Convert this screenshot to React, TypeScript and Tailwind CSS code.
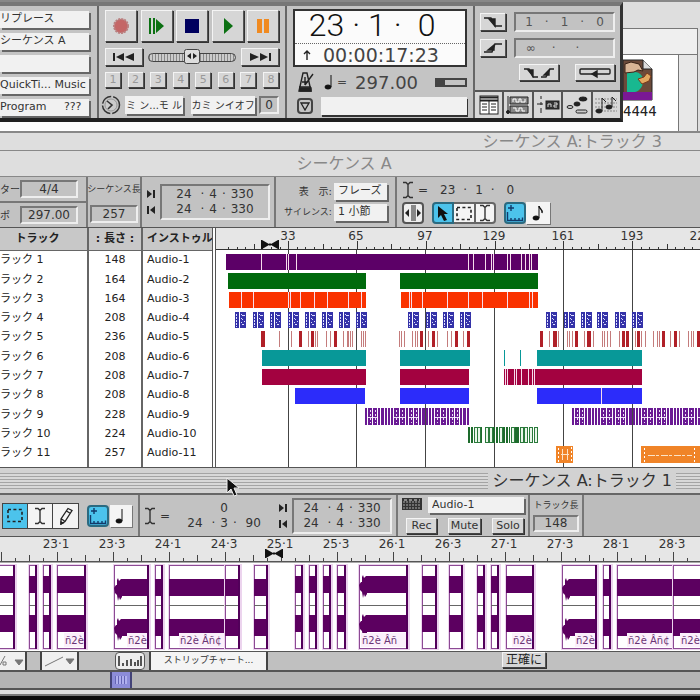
import React, { FC, ReactNode } from 'react';

const raised = 'border border-[#f4f4f4] border-r-[#555] border-b-[#444] bg-[#d6d6d6] shadow-[1px_1px_0_#333]';
const sunken = 'border-2 border-[#777] border-r-[#eee] border-b-[#eee] bg-[#c2c2c2]';
const popup = 'block appearance-none rounded-none bg-[#f1f1f1] text-[#333] shadow-[2px_2px_0_#666]';
const toolCell = 'flex items-center justify-center border border-[#444]';

interface Track {
  id: number,
  length: number,
  color: string,
  bars: number[][],
  gaps: number[],
}

const tracks: Track[] = [
  {
    id: 1, length: 148, color: '#5c0067', bars: [[226, 538]],
    gaps: [261, 286, 288, 296, 468, 473, 485, 491, 493, 507, 510, 521, 525, 529, 531],
  },
  { id: 2, length: 164, color: '#006a0c', bars: [[228, 366], [400, 538]], gaps: [] },
  {
    id: 3, length: 164, color: '#fa3200', bars: [[229, 366], [401, 538]],
    gaps: [241, 253, 288, 290, 300, 314, 327, 348, 361, 409, 411, 422, 447, 468, 482, 507, 529, 532],
  },
  { id: 4, length: 208, color: '#3432a8', bars: [], gaps: [] },
  { id: 5, length: 236, color: '#b04040', bars: [], gaps: [] },
  { id: 6, length: 208, color: '#089898', bars: [[262, 366], [400, 470], [504, 505], [520, 521], [537, 642]], gaps: [] },
  {
    id: 7, length: 208, color: '#a30240', bars: [[262, 366], [400, 469], [504, 642]],
    gaps: [505, 507, 514, 516, 521, 528, 532, 534],
  },
  { id: 8, length: 208, color: '#2c2cfa', bars: [[295, 365], [400, 469], [537, 642]], gaps: [601] },
  { id: 9, length: 228, color: '#6a1a94', bars: [], gaps: [] },
  { id: 10, length: 224, color: '#2b7a3c', bars: [], gaps: [] },
  { id: 11, length: 257, color: '#f08428', bars: [], gaps: [] },
];

const blueClips = [235, 253, 270, 288, 305, 322, 339, 356, 408, 426, 443, 460, 546, 564, 581, 597, 615, 632];
const redHits = [
  [261, 4], [279, 1], [291, 1], [299, 3], [308, 1], [311, 3], [315, 1], [317, 1], [326, 1], [330, 1], [334, 3],
  [343, 1], [347, 2], [350, 1], [352, 1], [361, 1], [363, 1], [365, 1], [399, 1], [401, 1], [404, 1], [412, 1],
  [415, 1], [417, 1], [420, 3], [428, 1], [432, 3], [437, 1], [447, 1], [451, 1], [455, 3], [463, 1], [467, 3],
  [540, 3], [549, 1], [553, 4], [558, 1], [567, 1], [569, 1], [572, 1], [575, 3], [584, 1], [587, 4], [593, 1],
  [602, 1], [604, 1], [607, 1], [610, 1], [619, 1], [622, 3], [626, 3], [635, 1], [637, 3], [641, 1], [645, 1],
  [653, 1], [657, 1], [659, 1], [662, 3], [670, 1], [674, 3], [679, 1], [688, 1], [691, 1], [693, 1], [697, 3],
];
const majorTicks = [288, 356, 425, 494, 563, 632, 701];

// edges and kind of every sound bite in the lower window
const bites: { x: number, w: number, attack?: boolean, low?: boolean, label?: string }[] = [
  { x: -12, w: 26 }, { x: 29, w: 7 }, { x: 43, w: 7 }, { x: 57, w: 28, label: 'ñ2è' },
  { x: 114, w: 34, attack: true, low: true, label: 'ñ2è' }, { x: 155, w: 7, low: true },
  { x: 169, w: 56, low: true, label: 'ñ2è Âñ¢' }, { x: 225, w: 14, low: true },
  { x: 254, w: 13, low: true }, { x: 295, w: 7 }, { x: 309, w: 7 }, { x: 323, w: 7 }, { x: 337, w: 8 },
  { x: 359, w: 48, attack: true, label: 'ñ2è Âñ' }, { x: 422, w: 14 }, { x: 449, w: 13 }, { x: 477, w: 7 },
  { x: 491, w: 7 }, { x: 506, w: 27, label: 'ñ2è' }, { x: 562, w: 34, attack: true, low: true, label: 'ñ2è' },
  { x: 603, w: 7, low: true }, { x: 617, w: 56, low: true, label: 'ñ2è Âñ¢' }, { x: 673, w: 28, low: true, label: 'ñ2è' },
];

const Counter: FC<{ parts: string[], className?: string }> = ({ parts, className = 'gap-[5px]' }) => (
  <span className={`flex items-center justify-center whitespace-pre ${className}`}>
    {parts.map((p, i) => <span key={i}>{p}</span>)}
  </span>
);

const Popup: FC<{ label: string, value: string, className?: string }> = ({ label, value, className = '' }) => (
  <select aria-label={label} className={`${popup} ${className}`}>
    <option>{value}</option>
  </select>
);

const Tool: FC<{ label: string, className?: string, children: ReactNode }> = ({ label, className = '', children }) => (
  <button type="button" aria-label={label} className={`flex shrink-0 items-center justify-center ${className}`}>
    {children}
  </button>
);

const IBeam: FC = () => (
  <svg width="12" height="18" fill="none" stroke="#333" strokeWidth="1.4">
    <path d="M1 1.5h3l2 2 2-2h3M6 3v12M1 16.5h3l2-2 2 2h3" />
  </svg>
);

const Marquee: FC = () => (
  <svg width="16" height="15" fill="none" stroke="#222" strokeWidth="1.6" strokeDasharray="3 2.4">
    <rect x="1" y="1.5" width="14" height="12" />
  </svg>
);

const SnapIcon: FC = () => (
  <svg width="18" height="18" fill="none" stroke="#123a6a" strokeWidth="1.4">
    <path d="M5 1v6M2 4h6M1.5 8v8.500h15v-3M5 16v-2M9 16v-2M13 16v-2" />
  </svg>
);

const NoteIcon: FC<{ flag?: boolean }> = ({ flag }) => (
  <svg width="14" height="18" fill="#111" stroke="#111">
    <ellipse cx="5" cy="14" rx="3" ry="2" />
    <path d="M8 14V2" />
    {flag && <path d="M8 2c0 3 4 3 3 7" fill="none" strokeWidth="1.4" />}
  </svg>
);

const BowTie: FC<{ x: number, y: number }> = ({ x, y }) => (
  <path d={`M${x} ${y}h1l7 4 1-1 1 1 7-4h1v9h-1l-7-4-1 1-1-1-7 4h-1z`} fill="#111" />
);

const SelectionTimes: FC = () => (
  <div className="flex flex-1 items-center gap-1 px-1">
    <svg width="10" height="28" fill="#222">
      <path d="M1 2l5 4-5 4zM7 2h2v8h-2zM9 18l-5 4 5 4zM1 18h2v8h-2z" />
    </svg>
    <div className={`flex flex-1 flex-col ${sunken} py-px text-[12px] leading-[15px]`}>
      <Counter parts={['24 ', '·', '4', '·', '330']} />
      <Counter parts={['24 ', '·', '4', '·', '330']} />
    </div>
  </div>
);

const Transport: FC = () => (
  <div className="flex w-[188px] shrink-0 flex-col gap-[6px] border-r-2 border-[#666] px-[6px] pt-1">
    <div className="flex justify-between">
      <Tool label="Record" className={`${raised} h-8 w-8`}>
        <svg width="18" height="18"><circle cx="9" cy="9" r="7" fill="#c46666" stroke="#b98080" strokeWidth="2" strokeDasharray="2 1" /></svg>
      </Tool>
      <Tool label="Wait" className={`${raised} h-8 w-8`}>
        <svg width="18" height="18" fill="#0b7012"><path d="M1 1h2v16h-2zM5 1h2v16h-2zM8 2l8 7-8 7z" /></svg>
      </Tool>
      <Tool label="Stop" className={`${raised} h-8 w-8`}>
        <svg width="16" height="16"><rect x="1" y="1" width="14" height="14" fill="#00005e" /></svg>
      </Tool>
      <Tool label="Play" className={`${raised} h-8 w-8`}>
        <svg width="16" height="18" fill="#0b7012"><path d="M4 1l9 8-9 8z" /></svg>
      </Tool>
      <Tool label="Pause" className={`${raised} h-8 w-8`}>
        <svg width="14" height="16" fill="#f08a20"><path d="M1 1h5v14H1zM8 1h5v14H8z" /></svg>
      </Tool>
    </div>
    <div className="flex items-center justify-between">
      <Tool label="Rewind" className={`${raised} h-[18px] w-[38px]`}>
        <svg width="24" height="10" fill="#222"><path d="M1 1h2v8H1zM12 1v8L4 5zM22 1v8l-9-4z" /></svg>
      </Tool>
      <label className="relative flex h-[18px] w-[88px] items-center">
        <input type="range" aria-label="Scrub" className="absolute inset-0 w-full opacity-0" />
        <span className="h-[9px] w-full rounded-full border border-[#444] bg-[repeating-linear-gradient(90deg,#888_0_1px,#ccc_1px_3px)]" />
        <svg className="absolute left-9" width="17" height="18">
          <rect x="0.5" y="1.500" width="15" height="14" rx="2" fill="#ddd" stroke="#444" />
          <path d="M7 5v6L3 8zM9 5v6l4-3z" fill="#222" />
        </svg>
      </label>
      <Tool label="Fast forward" className={`${raised} h-[18px] w-[38px]`}>
        <svg width="24" height="10" fill="#222"><path d="M21 1h2v8h-2zM12 1v8l8-4zM2 1v8l9-4z" /></svg>
      </Tool>
    </div>
    <div className="flex justify-between">
      {[1, 2, 3, 4, 5, 6, 7, 8].map((n) => (
        <button key={n} type="button" className={`${raised} h-4 w-4 bg-[#c8c8c8] text-[11px] leading-3 text-[#999]`}>
          {n}
        </button>
      ))}
    </div>
    <div className="flex items-center gap-1 pt-px">
      <svg className="-ml-1 shrink-0" width="20" height="20" fill="none" stroke="#333">
        <circle cx="10" cy="10" r="8.500" strokeDasharray="12 2" strokeWidth="1.500" />
        <circle cx="10" cy="10" r="6" fill="#ccc" stroke="#999" />
        <path d="M6 6l5 4-4 4" strokeWidth="1.600" />
      </svg>
      <button type="button" className={`${popup} h-[18px] w-[60px] whitespace-pre text-[10px]`}>ミ ン...モ ル</button>
      <button type="button" className={`${popup} ml-1 h-[18px] w-[66px] whitespace-pre text-[10px]`}>カミ ンイオフ</button>
      <span className={`${sunken} h-[18px] w-5 shrink-0 text-center text-[12px] leading-[14px]`}>0</span>
    </div>
  </div>
);

const Display: FC = () => (
  <div className="flex w-[188px] shrink-0 flex-col border-r-2 border-[#666] px-[6px] pt-[3px]">
    <div className="border-2 border-[#333] bg-[#fbfbfb]">
      <div className="flex h-[33px] items-center justify-center gap-2 border-b border-dotted border-[#666] pr-4 pb-1 font-['Roboto',sans-serif] text-[32px] leading-7 font-light text-[#111]">
        <span>23</span>
        <span>·</span>
        <span>1</span>
        <span>·</span>
        <span className="pl-2">0</span>
      </div>
      <div className="flex h-[21px] items-center gap-3 pl-2 text-[19px] leading-5 text-[#444]">
        <svg width="8" height="12" fill="none" stroke="#222" strokeWidth="1.400"><path d="M4 11V2M1 5l3-3 3 3" /></svg>
        <span>00:00:17:23</span>
      </div>
    </div>
    <div className="flex h-[30px] items-center gap-2 pl-1 text-[18px] text-[#444]">
      <svg width="18" height="22" fill="none" stroke="#222" strokeWidth="1.400">
        <path d="M6 2h4l4 18H2zM2 16h12M8 14l8-11M8 6v8M5 11h6" />
        <path d="M3 17h11v3H3z" fill="#222" />
      </svg>
      <NoteIcon />
      <span className="-ml-2 text-[12px]">=</span>
      <span className="flex-1">297.00</span>
      <span className="flex h-[9px] w-8 border-2 border-[#444]"><span className="w-2 bg-[#444]" /></span>
    </div>
    <div className="flex items-center gap-2 pl-1">
      <Tool label="Options" className="h-4 w-4 rounded-sm border-2 border-[#444]">
        <svg width="10" height="9" fill="none" stroke="#222" strokeWidth="1.300"><path d="M1 1h8L5 8z" /></svg>
      </Tool>
      <span className="h-[18px] flex-1 bg-[#f1f1f1] shadow-[1px_2px_0_#333]" />
    </div>
  </div>
);

const Memory: FC = () => (
  <div className="flex w-[145px] shrink-0 flex-col justify-between">
    <div className="flex flex-col gap-[6px] px-[5px] pt-[6px] text-[12px] text-[#555]">
      <div className="flex items-center gap-2">
        <Tool label="Go to start" className={`${raised} h-[18px] w-[26px]`}>
          <svg width="20" height="14" fill="none" stroke="#222" strokeWidth="1.400"><path d="M1 3h7l4 8h7" /><path d="M6 4h6v7z" fill="#222" /></svg>
        </Tool>
        <div className={`${sunken} h-5 flex-1`}><Counter className="gap-3 leading-4" parts={['1', '·', '1', '·', '0']} /></div>
      </div>
      <div className="flex items-center gap-2">
        <Tool label="Go to end" className={`${raised} h-[18px] w-[26px]`}>
          <svg width="20" height="14" fill="none" stroke="#222" strokeWidth="1.400"><path d="M1 11h8l3-8h7" /><path d="M5 9h6V4z" fill="#222" /></svg>
        </Tool>
        <div className={`${sunken} h-5 flex-1`}><Counter className="gap-4 pr-6 leading-4" parts={['∞', '·', ' ·']} /></div>
      </div>
      <div className="flex justify-end gap-4">
        <Tool label="Auto memory" className={`${raised} h-[17px] w-10`}>
          <svg width="32" height="12" fill="none" stroke="#222" strokeWidth="1.400"><path d="M1 2h5l4 8h5M18 10h5l4-8h4" /><path d="M5 3h5v6zM21 8h5V3z" fill="#222" /></svg>
        </Tool>
        <Tool label="Loop" className={`${raised} h-[17px] w-10`}>
          <svg width="32" height="12" fill="none" stroke="#222" strokeWidth="1.400"><rect x="1" y="2" width="30" height="5" rx="1" /><path d="M18 4v6l-5-3z" fill="#222" /></svg>
        </Tool>
      </div>
    </div>
    <div className="flex h-7 border-t-2 border-[#555]">
      <Tool label="Tracks" className="flex-1 border-r-2 border-[#555] bg-[#d8d8d8]">
        <svg width="20" height="20" fill="none" stroke="#222"><rect x="1" y="1" width="18" height="18" fill="#fff" /><path d="M1 2.500h18M1 5.500h18" strokeWidth="2" /><path d="M10 5v14M3 9h5M3 12h5M3 15h5M12 9h5M12 12h5M12 15h5" /></svg>
      </Tool>
      <Tool label="Sequence" className="flex-1 border-r-2 border-[#555] bg-[#d8d8d8]">
        <svg width="24" height="20" fill="none" stroke="#222"><path d="M4 2h18v7H4zM4 11h18v7H4z" fill="#888" /><path d="M7 7V4h3v3h3V4h2v3h4V4M7 13h3v3h3v-3h3v3h3" stroke="#fff" /><path d="M2 1v18" /><circle cx="2" cy="17" r="1.500" fill="#222" /></svg>
      </Tool>
      <Tool label="Events" className="flex-1 border-r-2 border-[#555] bg-[#d8d8d8]">
        <svg width="24" height="20" fill="#333" stroke="#222"><path d="M5 1v3M5 7v3M5 13v5M1 9h6" /><rect x="10" y="6" width="13" height="8" /><path d="M12 12v-3h3v3M18 8h3v2h-3v2h3" stroke="#ddd" fill="none" /></svg>
      </Tool>
      <Tool label="Graphic" className="flex-1 border-r-2 border-[#555] bg-[#d8d8d8]">
        <svg width="22" height="20" fill="#222" stroke="#222"><ellipse cx="17" cy="4" rx="4" ry="2" /><ellipse cx="11" cy="9" rx="3" ry="2" /><ellipse cx="4" cy="12" rx="3" ry="1.500" fill="#ccc" /><rect x="10" y="15" width="11" height="3" rx="1.500" fill="#ccc" /></svg>
      </Tool>
      <Tool label="Notation" className="flex-1 bg-[#d8d8d8]">
        <svg width="24" height="20" fill="#222" stroke="#222"><path d="M1 4h22M1 8h22M1 12h22M1 16h22" stroke="#888" strokeDasharray="2 1" /><ellipse cx="5" cy="16" rx="3" ry="2" /><path d="M8 16V3l4 4" fill="none" /><ellipse cx="15" cy="12" rx="3" ry="2" /><path d="M18 12V2l4 4" fill="none" /></svg>
      </Tool>
    </div>
  </div>
);

const ControlPanel: FC = () => (
  <div className="absolute top-0 left-0 flex h-[120px] border-t-4 border-r-3 border-b-4 border-t-[#777] border-r-[#333] border-b-[#222] bg-[#c4c4c4]">
    <div className="flex w-[99px] shrink-0 flex-col gap-[5px] border-r-2 border-[#666] pt-[5px] pr-2">
      <Popup label="Record mode" value="リプレース" className="h-[17px] w-full text-[11px]" />
      <Popup label="Sequence" value="シーケンス A" className="h-[17px] w-full text-[11px]" />
      <Popup label="Take" value="" className="h-[17px] w-full text-[11px]" />
      <Popup label="Device" value="QuickTi... Music" className="h-[17px] w-full text-[11px]" />
      <Popup label="Patch" value={'Program\u00a0\u00a0\u00a0\u00a0\u00a0???'} className="h-[17px] w-full text-[11px]" />
    </div>
    <Transport />
    <Display />
    <Memory />
  </div>
);

const FinderIcon: FC = () => (
  <svg width="32" height="42">
    <path d="M0 1h20l9 9v31H0z" fill="#6b4a3a" stroke="#222" />
    <path d="M20 1v9h9" fill="#ddd" stroke="#222" />
    <path d="M4 14c8-3 15 0 16 6s-3 12-8 13H4z" fill="#18b890" />
    <path d="M15 20l6-2 3-4 4 3-2 5-7 3z" fill="#e2a860" stroke="#7a3a1a" />
    <path d="M2 5l6-2 8 2 4 7-5-1-4 2-9 1z" fill="#d9b596" stroke="#3a2418" />
    <path d="M0 33h29v8H0z" fill="#7a1894" />
  </svg>
);

const Desktop: FC = () => (
  <div className="relative flex h-[131px] flex-col border-t-2 border-[#888] bg-[#dedede]">
    <div className="h-[26px]" />
    <div className="mr-[2px] flex flex-1 flex-col border-t border-r border-[#777] bg-[#efefef]">
      <div className="h-[26px] border-b border-[#777]" />
      <div className="flex flex-1">
        <div className="flex-1 border-r border-[#777] bg-white pl-[623px]">
          <div className="flex h-[66px] flex-col justify-end">
            <FinderIcon />
            <span className="font-['DejaVu_Sans_Mono',monospace] text-[14px] leading-5 text-[#222]">4444</span>
          </div>
        </div>
        <div className="w-[18px] bg-[#e8e8e8]" />
      </div>
    </div>
    <ControlPanel />
  </div>
);

const Clip: FC<{ x: number, y: number }> = ({ x, y }) => (
  <g>
    <rect x={x} y={y} width="4" height="16" fill="#3432a8" />
    <path d={`M${x + 1.5} ${y + 2}v13`} stroke="#dfe0ff" strokeDasharray="2 1" />
    <rect x={x + 5} y={y} width="6" height="16" fill="#3432a8" />
    <path d={`M${x + 7} ${y + 3}h3M${x + 7} ${y + 7}h1M${x + 9} ${y + 9}h1M${x + 7} ${y + 12}h2`} stroke="#dfe0ff" />
    <path d={`M${x + 6.5} ${y + 2}v12`} stroke="#dfe0ff" strokeDasharray="1 3" />
  </g>
);

const Stripes: FC<{ from: number, to: number, y: number, color: string }> = ({ from, to, y, color }) => {
  const widths = [2, 4, 4, 2, 3, 2, 2, 2, 5, 5];
  const items: ReactNode[] = [];
  let x = from;
  for (let i = 0; x < to; i += 1) {
    const w = widths[i % widths.length];
    items.push(<rect key={x} x={x} y={y} width={w} height="17" fill={color} />);
    if (w > 3) {
      items.push(<path key={`d${x}`} d={`M${x + 2} ${y + 2}v13`} stroke="#eadcf5" strokeDasharray="2 2" />);
      items.push(<path key={`c${x}`} d={`M${x} ${y + 9}h${w}`} stroke="#eadcf5" />);
    }
    x += w + 1;
  }
  return <g>{items}</g>;
};

const Overview: FC = () => {
  const rowY = (id: number) => Math.round(4 + (id - 1) * 19.2);
  return (
    <svg className="block w-full" height="217">
      <g transform="translate(-216 0)" shapeRendering="crispEdges">
        {majorTicks.map((x) => <path key={x} d={`M${x + 0.5} 0v218`} stroke="#444" />)}
        {tracks.map((t) => (
          <g key={t.id}>
            {t.bars.map(([a, b]) => <rect key={a} x={a} y={rowY(t.id)} width={b - a} height="16" fill={t.color} />)}
            {t.gaps.map((g) => <rect key={g} x={g} y={rowY(t.id)} width="1" height="16" fill="#f6dcec" />)}
          </g>
        ))}
        {blueClips.map((x) => <Clip key={x} x={x} y={rowY(4)} />)}
        {redHits.map(([x, w]) => (
          <rect key={x} x={x} y={rowY(5)} width={w} height="16" fill={w > 2 ? '#b02028' : '#c47c7c'} />
        ))}
        <Stripes from={365} to={468} y={rowY(9)} color="#6a1a94" />
        <Stripes from={572} to={720} y={rowY(9)} color="#6a1a94" />
        {[468, 471, 493, 496, 501, 503, 506, 515, 517].map((x) => (
          <rect key={x} x={x} y={rowY(10)} width="2" height="16" fill="#1d6b2c" />
        ))}
        {[474, 477, 485, 489, 499, 511, 520, 524, 529, 534].map((x) => (
          <rect key={x} x={x + 0.5} y={rowY(10) + 0.5} width="3" height="15" fill="#eaf6ea" stroke="#2b7a3c" />
        ))}
        {[481, 509].map((x) => <rect key={x} x={x} y={rowY(10)} width="1" height="16" fill="#1d6b2c" />)}
        <rect x="556" y={rowY(11)} width="17" height="17" fill="#f08428" />
        <path d={`M558.500 ${rowY(11) + 2}v14M571.500 ${rowY(11) + 1}v15`} stroke="#fff" strokeDasharray="2 2" />
        <path d={`M561 ${rowY(11) + 8}h8M562.500 ${rowY(11) + 3}v11M567.500 ${rowY(11) + 3}v11`} stroke="#fbe3c8" />
        <rect x="641" y={rowY(11)} width="90" height="17" fill="#f08428" />
        <path d={`M644.500 ${rowY(11) + 2}v14M694.500 ${rowY(11) + 2}v14`} stroke="#fff" strokeDasharray="2 2" />
        <path d={`M648 ${rowY(11) + 9}h44`} stroke="#fbe3c8" strokeDasharray="7 1 3 2" />
      </g>
    </svg>
  );
};

const OverviewRuler: FC = () => {
  const ticks = Array.from({ length: 60 }, (_, i) => i);
  return (
    <svg className="block w-full bg-[#e6e6e6]" height="22">
      <g transform="translate(-216 0)">
        {ticks.map((i) => {
          const x = 228 + i * 8.6;
          const tall = i % 8 === 7;
          return <path key={i} d={`M${Math.round(x) + 0.5} 22v${tall ? -9 : i % 4 === 3 ? -6 : -3}`} stroke="#333" />;
        })}
        <path d="M215 21.500h2000" stroke="#333" />
        {majorTicks.map((x, i) => (
          <text key={x} x={x} y="12" textAnchor="middle" fontSize="12" fill="#333">{33 + i * 32}</text>
        ))}
        <BowTie x={261} y={12} />
      </g>
    </svg>
  );
};

const SequenceWindow: FC = () => (
  <section className="bg-[#dedede]">
    <h2 className="h-[27px] border-y border-[#888] pr-3 text-center text-[16px] leading-[25px] text-[#888]">シーケンス A</h2>
    <div className="flex h-[50px] bg-[#c2c2c2] text-[12px] text-[#333]">
      <div className="flex w-[88px] shrink-0 flex-col border-r-2 border-[#777]">
        <div className="flex flex-1 items-center justify-between border-b-2 border-[#777] pr-2 text-[10px]">
          ター
          <span className={`${sunken} h-[18px] w-[58px] text-center text-[12px] leading-[14px]`}>4/4</span>
        </div>
        <div className="flex flex-1 items-center justify-between pr-2 text-[10px]">
          ポ
          <span className={`${sunken} h-[18px] w-[58px] text-center text-[12px] leading-[14px]`}>297.00</span>
        </div>
      </div>
      <div className="flex w-[54px] shrink-0 flex-col items-center justify-between border-r-2 border-[#777] pt-1 pb-1 whitespace-nowrap">
        <span className="text-[9px] leading-4">シーケンス長</span>
        <span className={`${sunken} h-[18px] w-12 text-center leading-[14px]`}>257</span>
      </div>
      <div className="flex w-[134px] shrink-0 border-r-2 border-[#777]"><SelectionTimes /></div>
      <div className="flex w-[121px] shrink-0 flex-col justify-center gap-1 border-r-2 border-[#777] px-2 text-[9px]">
        <label className="flex items-center justify-between whitespace-pre">
          <span className="w-12 text-right text-[10px]">表　示:</span>
          <Popup label="表示" value="フレーズ" className="h-[17px] w-[53px] pl-1 text-[11px]" />
        </label>
        <label className="flex items-center justify-between">
          <span className="whitespace-nowrap">サイレンス:</span>
          <Popup label="サイレンス" value="1 小節" className="h-[17px] w-[53px] pl-1 text-[11px]" />
        </label>
      </div>
      <div className="flex flex-col justify-between pt-1 pb-[3px] pl-[5px]">
        <div className="flex items-center gap-1 leading-[18px]">
          <IBeam />
          =
          <Counter className="gap-2 pl-2" parts={['23', '·', '1', '·', ' 0']} />
        </div>
        <div className="flex">
          <Tool label="Zoom" className="h-[22px] w-[22px] rounded border-2 border-[#555] bg-[#eee]">
            <svg width="18" height="16" fill="#222"><path d="M5 4v8L1 8zM13 4v8l4-4z" /><path d="M7 0h5v16H7z" fill="#888" /></svg>
          </Tool>
          <Tool label="Pointer" className="ml-2 h-[22px] w-[22px] rounded-l border-2 border-[#2b6a80] bg-[#4cc3ec]">
            <svg width="12" height="16" fill="#111"><path d="M1 1v12l3-3 3 6 3-1-3-6h4z" /></svg>
          </Tool>
          <Tool label="Marquee" className="h-[22px] w-5 border-y-2 border-[#666] bg-[#f4f4f4]"><Marquee /></Tool>
          <Tool label="I-beam" className="h-[22px] w-[22px] rounded-r border-2 border-[#666] bg-[#f4f4f4]"><IBeam /></Tool>
          <Tool label="Snap" className="ml-2 h-[22px] w-[22px] rounded border-2 border-[#2b6a80] bg-[#4cc3ec]"><SnapIcon /></Tool>
          <Tool label="Note" className="h-[22px] w-6 bg-[#f4f4f4] shadow-[1px_1px_0_#777]"><NoteIcon flag /></Tool>
        </div>
      </div>
    </div>
    <div className="flex border-y border-[#555] bg-white">
      <table className="h-[239px] w-[212px] shrink-0 table-fixed border-collapse text-left text-[11px] leading-[18px] whitespace-nowrap text-[#222]">
        <thead className="bg-[#c8c8c8]">
          <tr className="h-[22px]">
            <th className="w-[88px] border-r-2 border-b border-[#666] p-0 pr-3 text-center leading-[21px]">トラック</th>
            <th className="w-[54px] border-r-2 border-b border-[#666] p-0 text-center leading-[21px]">: 長さ :</th>
            <th className="overflow-hidden border-b border-[#666] p-0 pl-1 leading-[21px]">インストゥル</th>
          </tr>
        </thead>
        <tbody>
          {tracks.map((t) => (
            <tr key={t.id}>
              <td className="border-r-2 border-[#666] p-0">{`ラック ${t.id}`}</td>
              <td className="border-r-2 border-[#666] p-0 text-center">{t.length}</td>
              <td className="p-0 pl-1">{`Audio-${t.id}`}</td>
            </tr>
          ))}
          <tr className="h-1">
            <td className="border-r-2 border-[#666] p-0" />
            <td className="border-r-2 border-[#666] p-0" />
            <td className="p-0" />
          </tr>
        </tbody>
      </table>
      <div className="min-w-0 flex-1 border-l-4 border-double border-[#555]">
        <OverviewRuler />
        <Overview />
      </div>
    </div>
  </section>
);

const Bite: FC<{ bite: typeof bites[number] }> = ({ bite }) => {
  const { x, w, attack, low, label } = bite;
  const top = low ? 18 : 15;
  const second = low ? 58 : 54;
  const start = attack ? x + 7 : x;
  const spike = (y: number) => `M${x} ${y + 9}l2-3h1v-5l1-2 1 3 2-2h1v18l-2 3-1-3-1 4-1-6-2-2z`;
  const textWidth = label ? (label.length > 3 ? 45 : 20) : 0;
  return (
    <g>
      <rect x={x - 1} y="3" width={w + 4} height="86" fill="#ecd4ee" />
      <rect x={x + 0.5} y="4.500" width={w} height="83" fill="#fff" stroke="#8c4a94" />
      <path d={`M${x} 44.500h${w}`} stroke="#666" />
      <rect x={start} y={top} width={x + w - start} height="17" fill="#5c0060" />
      <rect x={start} y={second} width={x + w - start} height="17" fill="#5c0060" />
      {attack && <path d={`${spike(top)}${spike(second)}`} fill="#5c0060" />}
      <rect x={x + w - 1} y="4" width="2" height="84" fill="#52005a" />
      {label && (
        <g>
          <rect x={x + w - textWidth - 1} y="72" width={textWidth} height="14" fill="#fbeffb" />
          <text x={x + w - textWidth} y="83" fontSize="10" fill="#6a3474">{label}</text>
        </g>
      )}
    </g>
  );
};

const TrackRuler: FC = () => {
  const labels = Array.from({ length: 12 }, (_, i) => `${23 + Math.floor(i / 2)}·${i % 2 ? 3 : 1}`);
  const ticks = Array.from({ length: 100 }, (_, i) => i);
  return (
    <svg className="block w-full bg-[#e6e6e6]" height="24">
      {ticks.map((i) => (
        <path key={i} d={`M${i * 14 + 1.5} 24v${i % 4 === 0 ? -9 : i % 2 === 0 ? -6 : -3}`} stroke="#444" />
      ))}
      {labels.map((l, i) => (
        <text key={l} x={56 + i * 56} y="11" textAnchor="middle" fontSize="12" fill="#333">{l}</text>
      ))}
      <BowTie x={265} y={12} />
    </svg>
  );
};

const TrackWindow: FC = () => (
  <section className="bg-[#c2c2c2] text-[12px] text-[#333]">
    <div className="flex h-[25px] items-center gap-1 bg-[#d2d2d2]">
      <span className="h-4 flex-1 bg-[repeating-linear-gradient(#a4a4a4_0_1px,#d8d8d8_1px_3px)]" />
      <h2 className="text-[16px] leading-6 whitespace-nowrap">シーケンス A:トラック 1</h2>
      <span className="h-4 w-6 bg-[repeating-linear-gradient(#a4a4a4_0_1px,#d8d8d8_1px_3px)]" />
    </div>
    <div className="flex h-[43px] border-t-2 border-[#666]">
      <div className="flex w-[140px] shrink-0 items-center border-r-2 border-[#777] pl-[2px]">
        <Tool label="Marquee" className={`${toolCell} h-[26px] w-[26px] bg-[#4cc3ec]`}><Marquee /></Tool>
        <Tool label="I-beam" className={`${toolCell} h-[26px] w-[25px] border-l-0 bg-[#f4f4f4]`}><IBeam /></Tool>
        <Tool label="Pencil" className={`${toolCell} h-[26px] w-[26px] border-l-0 bg-[#f4f4f4]`}>
          <svg width="16" height="18" fill="none" stroke="#222" strokeWidth="1.300"><path d="M10 1.500l4 2-7 11-4 2.500v-5zM8.500 4l4 2.500M3.500 12l3 2" /><path d="M3 15v2l2-1z" fill="#222" /></svg>
        </Tool>
        <Tool label="Snap" className="ml-2 h-[22px] w-[22px] rounded border-2 border-[#2b6a80] bg-[#4cc3ec]"><SnapIcon /></Tool>
        <Tool label="Note" className="ml-px h-[22px] w-[22px] bg-[#f4f4f4] shadow-[1px_1px_0_#777]"><NoteIcon /></Tool>
      </div>
      <div className="flex w-[258px] shrink-0 items-center border-r-2 border-[#777] pl-1">
        <IBeam />
        <span className="pl-1">=</span>
        <div className="flex w-[104px] flex-col pl-1 text-center leading-[15px]">
          <span>0</span>
          <Counter className="gap-[5px]" parts={['24', ' ·', '3', '·', ' 90']} />
        </div>
        <SelectionTimes />
      </div>
      <div className="flex w-[132px] shrink-0 flex-col justify-between border-r-2 border-[#777] px-1 pt-[2px] pb-[2px]">
        <div className="flex gap-[6px]">
          <svg width="20" height="14"><path d="M0 1h20v12H0z" fill="#333" /><path d="M1 5h18M1 8h18M1 11h18" stroke="#aaa" strokeDasharray="2 1" /><path d="M2 3h16" stroke="#ddd" strokeDasharray="3 2" /></svg>
          <Popup label="Instrument" value="Audio-1" className="h-4 flex-1 pl-1 text-[11px] leading-4" />
        </div>
        <div className="flex justify-between pl-1 text-[11px] leading-[14px]">
          <button type="button" className={`${raised} w-[31px] bg-[#bcbcbc]`}>Rec</button>
          <button type="button" className={`${raised} w-[33px] bg-[#bcbcbc]`}>Mute</button>
          <button type="button" className={`${raised} w-[32px] bg-[#bcbcbc]`}>Solo</button>
        </div>
      </div>
      <div className="flex w-[54px] shrink-0 flex-col items-center justify-between border-r-2 border-[#777] pt-[2px] pb-1">
        <span className="text-[9px] leading-4">トラック長</span>
        <span className={`${sunken} h-[17px] w-[46px] text-center leading-[13px]`}>148</span>
      </div>
      <div className="flex-1 bg-[#bcbcbc]" />
    </div>
    <div className="border-y border-[#555]">
      <TrackRuler />
      <svg className="block w-full bg-white" height="90">
        <path d="M0 0.500h3000" stroke="#555" strokeWidth="2" />
        {bites.map((b) => <Bite key={b.x} bite={b} />)}
      </svg>
    </div>
    <div className="flex h-[18px] items-stretch bg-[#c0c0c0]">
      <Tool label="Percent" className="w-[27px] border-r-2 border-[#444] bg-[#f0f0f0]">
        <svg width="26" height="14" fill="none" stroke="#777"><path d="M0 11l5-9M3 8h3v3H3z" /><path d="M15 6h8l-4 5z" fill="#777" /></svg>
      </Tool>
      <Tool label="Line" className="ml-[13px] w-[39px] border-x-2 border-[#444] bg-[#f0f0f0]">
        <svg width="34" height="14" fill="none" stroke="#777"><path d="M2 12L20 3" /><path d="M23 5h8l-4 5z" fill="#777" /></svg>
      </Tool>
      <Tool label="Strip" className="ml-9 w-[30px] rounded border border-[#555] bg-[#eee]">
        <svg width="24" height="12" stroke="#222" strokeWidth="1.500"><path d="M1 1v10M5 8v3M9 5v6M13 4v7M17 7v4M20 5v6M23 1v10" /></svg>
      </Tool>
      <button type="button" className="ml-1 w-[119px] border-x-2 border-[#444] bg-[#f4f4f4] text-[9px] whitespace-nowrap">ストリップチャート...</button>
      <button type="button" className={`${raised} ml-[234px] h-4 w-11 bg-[#c8c8c8] text-[12px] leading-[14px] text-[#222]`}>正確に</button>
    </div>
    <div className="h-5 border-y-2 border-[#555] bg-[#b4b4b4] pl-[110px]">
      <div className="flex h-4 w-[22px] items-center justify-center border-x-2 border-[#444478] bg-[#8c8cd8]">
        <span className="h-2 w-3 bg-[repeating-linear-gradient(90deg,#6464b4_0_1px,#b0b0ee_1px_3px)]" />
      </div>
    </div>
    <div className="h-[6px] border-b-2 border-[#777] bg-[#dcdcdc]" />
  </section>
);

const App: FC = () => (
  <main className="relative flex min-h-screen flex-col overflow-hidden bg-[#0a0a0a] font-['DejaVu_Sans','Noto_Sans_CJK_JP',sans-serif] text-[#333]">
    <Desktop />
    <div className="h-[19px] border-t-2 border-[#888] bg-[#dedede] pr-[38px] text-right text-[16px] leading-[18px] text-[#888]">
      シーケンス A:トラック 3
    </div>
    <SequenceWindow />
    <TrackWindow />
    <svg className="pointer-events-none absolute top-[477px] left-[226px]" width="14" height="20">
      <path d="M1 1v15l4-4 3 7 3-1-3-7h5z" fill="#111" stroke="#eee" />
    </svg>
  </main>
);

export default App;
